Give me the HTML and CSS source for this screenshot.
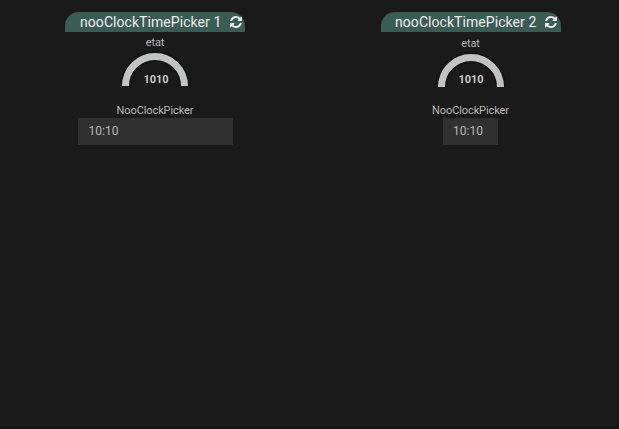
FILE: index.html
```
<!DOCTYPE html>
<html lang="fr">
<head>
<meta charset="utf-8">
<title>nooClockTimePicker</title>
<link rel="stylesheet" href="styles.css">
</head>
<body>
<svg class="defs" width="0" height="0" aria-hidden="true">
  <symbol id="refresh" viewBox="0 0 1536 1536">
    <path d="M1511 928q0 5-1 7-64 268-268 434.500T764 1536q-146 0-282.500-55T238 1324l-129 129q-19 19-45 19t-45-19-19-45V960q0-26 19-45t45-19h448q26 0 45 19t19 45-19 45l-137 137q71 66 161 102t187 36q134 0 250-65t186-179q11-17 53-117 8-23 30-23h192q13 0 22.500 9.500t9.500 22.500zm25-800v448q0 26-19 45t-45 19h-448q-26 0-45-19t-19-45 19-45l138-138Q969 256 768 256q-134 0-250 65T332 500q-11 17-53 117-8 23-30 23H50q-13 0-22.500-9.500T18 608v-7q65-268 270-434.500T768 0q146 0 284 55.500T1297 212l130-129q19-19 45-19t45 19 19 45z"/>
  </symbol>
</svg>
<main class="dashboard">
  <section class="widget">
    <header class="title"><span>nooClockTimePicker 1</span><svg class="refresh"><use href="#refresh"/></svg></header>
    <div class="label">etat</div>
    <div class="gauge">
      <svg class="arc" viewBox="0 0 70 36"><path class="halo" d="M5.500 36a29.500 29.500 0 0 1 59 0"/><path class="ring" d="M5.500 36a29.500 29.500 0 0 1 59 0"/></svg>
      <span class="value">1010</span>
    </div>
    <div class="label picker-label">NooClockPicker</div>
    <div class="field wide">10:10</div>
  </section>
  <section class="widget second">
    <header class="title"><span>nooClockTimePicker 2</span><svg class="refresh"><use href="#refresh"/></svg></header>
    <div class="label">etat</div>
    <div class="gauge">
      <svg class="arc" viewBox="0 0 70 36"><path class="halo" d="M5.500 36a29.500 29.500 0 0 1 59 0"/><path class="ring" d="M5.500 36a29.500 29.500 0 0 1 59 0"/></svg>
      <span class="value">1010</span>
    </div>
    <div class="label picker-label">NooClockPicker</div>
    <div class="field">10:10</div>
  </section>
</main>
</body>
</html>
```
FILE: styles.css
```
* { box-sizing: border-box; }
body {
  margin: 0;
  height: 429px;
  overflow: hidden;
  background: #1a1a1a;
  color: #b8b8b8;
  font-family: Roboto, sans-serif;
}
.defs { position: absolute; }
.dashboard {
  display: flex;
  gap: 136px;
  height: 100%;
  padding: 12px 0 0 65px;
  border-right: 1px solid #151515;
  border-bottom: 2px solid #151515;
}
.widget {
  display: flex;
  flex-direction: column;
  align-items: center;
  width: 180px;
}
.title {
  display: flex;
  align-items: center;
  width: 180px;
  height: 20px;
  padding-left: 15px;
  border-radius: 14px 14px 0 0;
  background: #3b5b55;
  color: #eee;
  font-size: 14px;
  letter-spacing: 0.06px;
  line-height: 20px;
  white-space: nowrap;
}
.title span { width: 150px; }
.second .title { padding-left: 14px; }
.refresh {
  flex: none;
  width: 12px;
  height: 12px;
  fill: #eee;
  margin-top: -1px;
}
.label {
  height: 18px;
  padding-top: 4px;
  font-size: 11px;
  letter-spacing: -0.1px;
  line-height: 13px;
}
.second .title + .label { padding-top: 5px; margin-right: 1px; }
.gauge {
  position: relative;
  width: 70px;
  height: 54px;
}
.arc { display: block; width: 70px; height: 36px; }
.second .arc { margin-top: 1px; }
.arc path { fill: none; }
.halo { stroke: #141414; stroke-width: 11; }
.ring { stroke: #c1c4c2; stroke-width: 7; }
.value {
  position: absolute;
  top: 23px;
  left: 1px;
  width: 70px;
  color: #ccc;
  font-size: 11px;
  font-weight: 700;
  line-height: 13px;
  text-align: center;
}
.second .value { left: 0; }
.picker-label { height: 14px; padding-top: 0; }
.second .picker-label { margin-right: 1px; }
.field {
  width: 55px;
  height: 27px;
  margin-right: 1px;
  padding-left: 10px;
  background: #303030;
  font-size: 12px;
  line-height: 26px;
}
.wide { width: 155px; margin-right: 0; padding-left: 11px; }
```
